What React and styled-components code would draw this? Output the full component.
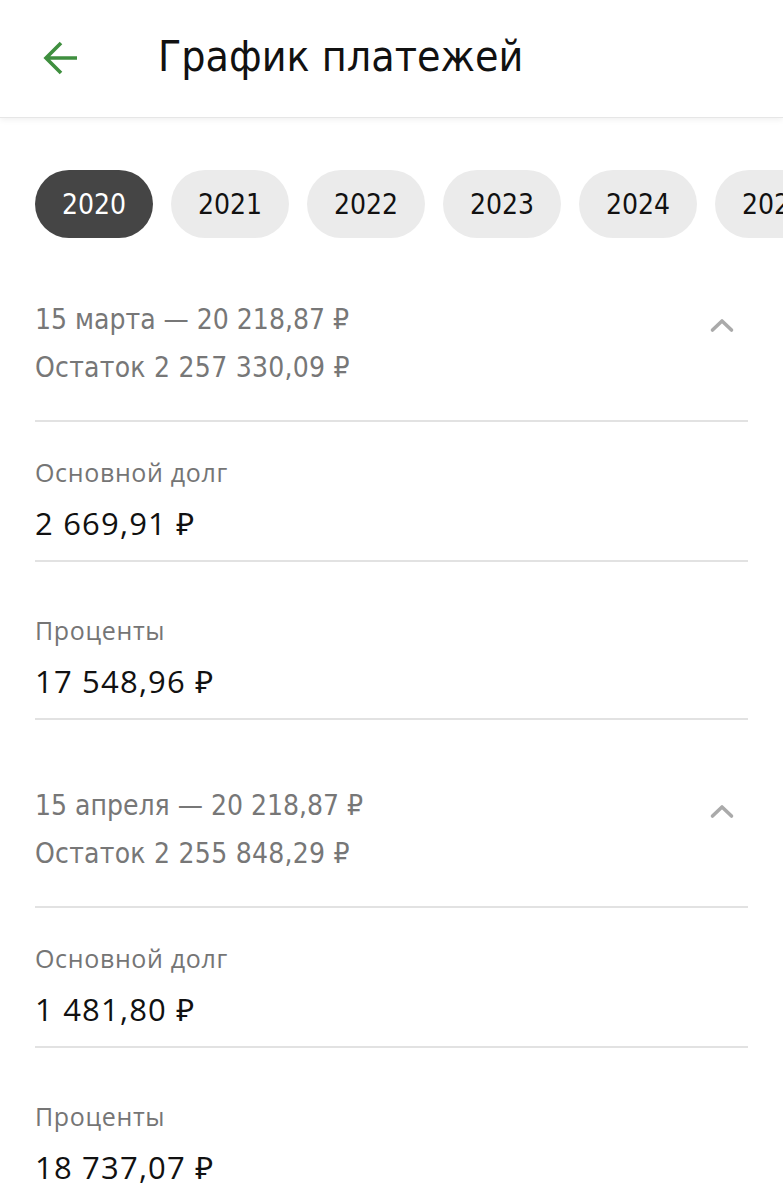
import React from "react";
import styled, { createGlobalStyle } from "styled-components";

const Global = createGlobalStyle`
  html, body { margin: 0; padding: 0; background: #fff; }
  body { font-family: "Open Sans", "Noto Sans", sans-serif; -webkit-font-smoothing: antialiased; }
  * { box-sizing: border-box; }
`;

const Page = styled.div`
  width: 783px;
  min-height: 1200px;
  background: #fff;
  overflow: hidden;
`;

const Header = styled.header`
  height: 117px;
  display: flex;
  align-items: center;
  padding-left: 41px;
  gap: 77px;
  background: #fff;
  box-shadow: 0 1px 0 #e6e6e6, 0 3px 6px rgba(0, 0, 0, 0.06);
  position: relative;
  z-index: 1;
`;

const BackButton = styled.button`
  border: 0;
  background: none;
  padding: 0;
  width: 40px;
  height: 40px;
  display: flex;
  align-items: center;
  justify-content: center;
  margin-top: -2px;
`;

const Title = styled.h1`
  margin: 0;
  font-family: "DejaVu Sans", sans-serif;
  font-stretch: condensed;
  font-weight: 400;
  font-size: 42.5px;
  color: #111;
  letter-spacing: 0;
  margin-top: -4px;
`;

const Years = styled.div`
  display: flex;
  gap: 18px;
  padding: 53px 0 0 35px;
  white-space: nowrap;
  overflow: hidden;
`;

const Pill = styled.div`
  flex: 0 0 auto;
  width: 118px;
  height: 68px;
  border-radius: 34px;
  display: flex;
  align-items: center;
  justify-content: center;
  font-family: "DejaVu Sans", sans-serif;
  font-stretch: condensed;
  font-size: 28px;
  color: ${(p) => (p.$active ? "#fff" : "#111")};
  background: ${(p) => (p.$active ? "#454545" : "#ebebeb")};
`;

const Content = styled.div`
  padding: 0 35px;
`;

const Section = styled.section`
  margin-top: ${(p) => p.$mt}px;
`;

const Head = styled.div`
  display: flex;
  justify-content: space-between;
  padding-bottom: 28px;
  border-bottom: 2px solid #e2e2e2;
`;

const HeadText = styled.div`
  font-family: "DejaVu Sans", sans-serif;
  font-stretch: condensed;
  font-size: 28px;
  line-height: 48px;
  color: #777;
  letter-spacing: ${(p) => (p.$wide ? "0.25px" : "0")};
`;

const Chevron = styled.div`
  width: 48px;
  display: flex;
  justify-content: center;
  padding-top: 21px;
  margin-right: 2px;
`;

const Item = styled.div`
  padding-top: ${(p) => (p.$first ? 32 : 50)}px;
  padding-bottom: 17px;
  border-bottom: 2px solid #e2e2e2;
`;

const Label = styled.div`
  font-size: 25px;
  line-height: 36px;
  color: #757575;
  letter-spacing: 0.65px;
`;

const Value = styled.div`
  margin-top: 13px;
  font-size: 31px;
  line-height: 40px;
  color: #111;
  letter-spacing: 1.2px;
`;

const Arrow = () => (
  <svg width="40" height="40" viewBox="0 0 40 40" fill="none">
    <path
      d="M36 20H6M20 5L5 20l15 15"
      stroke="#3f8f3f"
      strokeWidth="3.6"
      strokeLinecap="butt"
      strokeLinejoin="miter"
    />
  </svg>
);

const Caret = () => (
  <svg width="26" height="16" viewBox="0 0 26 16" fill="none">
    <path d="M3.5 13L13 4l9.5 9" stroke="#aaa" strokeWidth="3.6" strokeLinecap="round" strokeLinejoin="round" />
  </svg>
);

const years = ["2020", "2021", "2022", "2023", "2024", "2025"];

const payments = [
  {
    date: "15 марта",
    sum: "20 218,87 ₽",
    rest: "2 257 330,09 ₽",
    main: "2 669,91 ₽",
    pct: "17 548,96 ₽",
    mt: 58,
  },
  {
    date: "15 апреля",
    sum: "20 218,87 ₽",
    rest: "2 255 848,29 ₽",
    main: "1 481,80 ₽",
    pct: "18 737,07 ₽",
    mt: 62,
  },
];

export default function App() {
  return (
    <Page>
      <Global />
      <Header>
        <BackButton aria-label="Назад">
          <Arrow />
        </BackButton>
        <Title>График платежей</Title>
      </Header>
      <Years>
        {years.map((y, i) => (
          <Pill key={y} $active={i === 0}>
            {y}
          </Pill>
        ))}
      </Years>
      <Content>
        {payments.map((p) => (
          <Section key={p.date} $mt={p.mt}>
            <Head>
              <div>
                <HeadText>
                  {p.date} — {p.sum}
                </HeadText>
                <HeadText $wide>Остаток {p.rest}</HeadText>
              </div>
              <Chevron>
                <Caret />
              </Chevron>
            </Head>
            <Item $first>
              <Label>Основной долг</Label>
              <Value>{p.main}</Value>
            </Item>
            <Item>
              <Label>Проценты</Label>
              <Value>{p.pct}</Value>
            </Item>
          </Section>
        ))}
      </Content>
    </Page>
  );
}
